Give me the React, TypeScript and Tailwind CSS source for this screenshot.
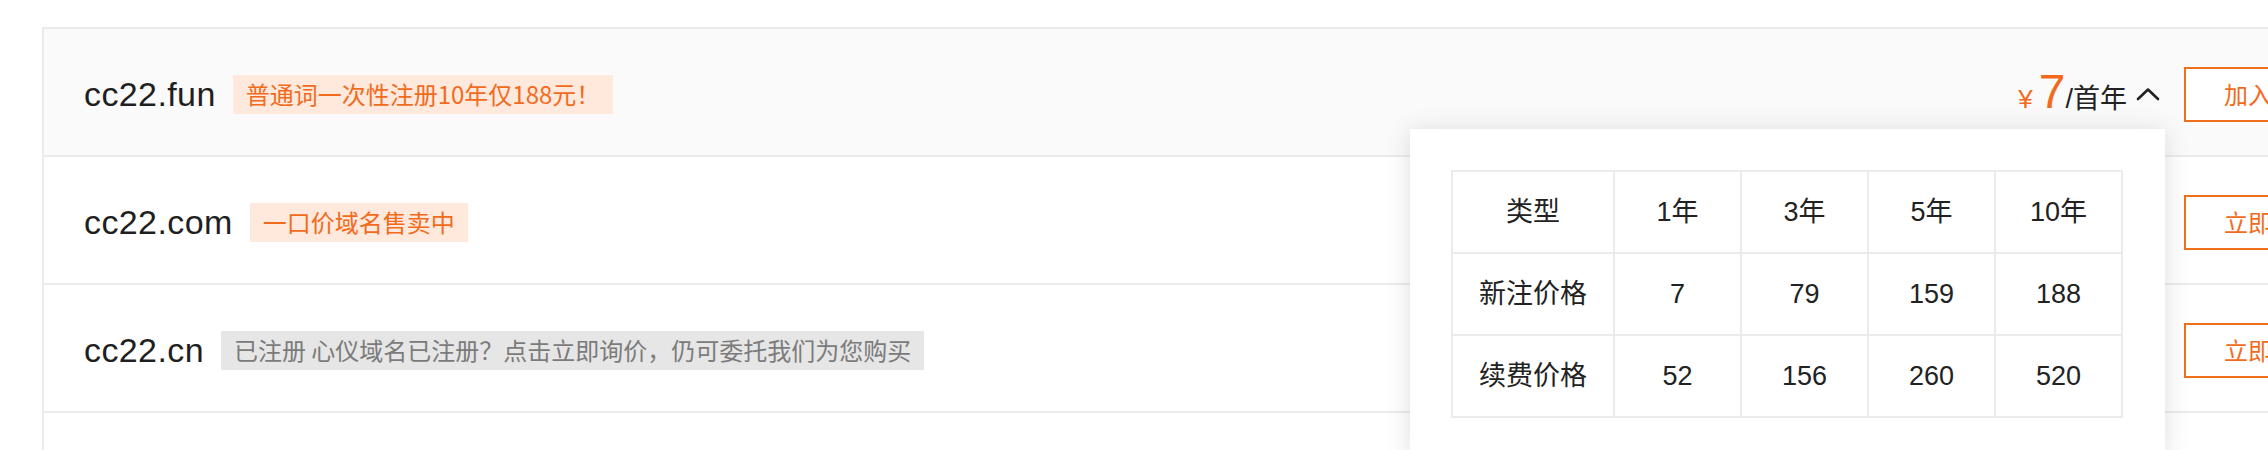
import React from "react";

const FONT = { fontFamily: '"Liberation Sans", Arial, "Noto Sans CJK SC", sans-serif' };

function ChevronUp() {
  return (
    <svg width="24" height="14" viewBox="0 0 24 14" fill="none" className="ml-[9px]">
      <path d="M2 12 L12 2.5 L22 12" stroke="#222" strokeWidth="2.6" strokeLinecap="round" strokeLinejoin="round" />
    </svg>
  );
}

type Row = {
  domain: string;
  tag: string;
  gray?: boolean;
  button: string;
  price?: boolean;
};

const rows: Row[] = [
  { domain: "cc22.fun", tag: "普通词一次性注册10年仅188元！", button: "加入购物车", price: true },
  { domain: "cc22.com", tag: "一口价域名售卖中", button: "立即购买" },
  { domain: "cc22.cn", tag: "已注册 心仪域名已注册？点击立即询价，仍可委托我们为您购买", gray: true, button: "立即询价" },
];

const table = [
  ["类型", "1年", "3年", "5年", "10年"],
  ["新注价格", "7", "79", "159", "188"],
  ["续费价格", "52", "156", "260", "520"],
];

export default function App() {
  return (
    <div className="w-full h-[450px] overflow-hidden bg-white" style={FONT}>
      <div className="pt-[27px] pl-[42px]">
        <div className="relative w-[2370px] border-t-2 border-l-2 border-[#ebebeb]">
          {rows.map((r, i) => (
            <div
              key={i}
              className={`flex items-center h-[128px] border-b-2 border-[#ebebeb] pt-[4px] pl-[40px] pr-[38px] ${i === 0 ? "bg-[#fafafa]" : "bg-white"}`}
            >
              <span className="text-[34px] leading-none tracking-[0.4px] text-[#1f1f1f]">{r.domain}</span>
              <span
                className={`ml-[17px] h-[39px] px-[13px] flex items-center text-[24px] leading-none ${r.gray ? "bg-[#e6e6e6] text-[#7b7b7b]" : "bg-[#fee9dc] text-[#f26b1d]"}`}
                style={{ fontFamily: '"Noto Sans CJK SC", "Liberation Sans", sans-serif' }}
              >
                {r.tag}
              </span>
              <div className="flex-1" />
              {r.price && (
                <div className="flex items-baseline text-[#f26b1d] mr-[24px]">
                  <span className="text-[26px] mr-[6px]">¥</span>
                  <span className="text-[48px] leading-none">7</span>
                  <span
                    className="text-[27px] text-[#222]"
                    style={{ fontFamily: '"Liberation Sans", "Noto Sans CJK SC", sans-serif' }}
                  >
                    /首年
                  </span>
                  <span className="self-center">
                    <ChevronUp />
                  </span>
                </div>
              )}
              <button
                className="w-[190px] h-[55px] border-2 border-[#ef6f1c] text-[#f26b1d] text-[24px] bg-white flex items-center pl-[38px] whitespace-nowrap overflow-hidden"
                style={{ fontFamily: '"Noto Sans CJK SC", sans-serif' }}
              >
                {r.button}
              </button>
            </div>
          ))}
          <div className="h-[60px] bg-white" />

          <div className="absolute left-[1366px] top-[100px] w-[755px] bg-white p-[41px] shadow-[0_2px_24px_rgba(0,0,0,0.13)]">
            <table className="border-collapse w-[672px]">
              <tbody>
                {table.map((row, ri) => (
                  <tr key={ri}>
                    {row.map((c, ci) => (
                      <td
                        key={ci}
                        className={`border-2 border-[#ebebeb] h-[82px] text-center text-[27px] text-[#222] ${ci === 0 ? "w-[162px]" : "w-[127px]"}`}
                        style={{ fontFamily: '"Liberation Sans", "Noto Sans CJK SC", sans-serif' }}
                      >
                        {c}
                      </td>
                    ))}
                  </tr>
                ))}
              </tbody>
            </table>
          </div>
        </div>
      </div>
    </div>
  );
}
